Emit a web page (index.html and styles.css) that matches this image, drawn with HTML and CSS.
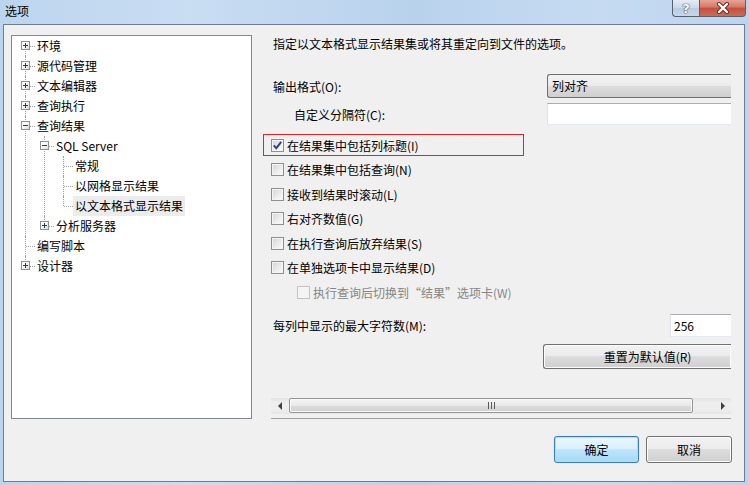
FILE: index.html
```html
<!DOCTYPE html>
<html lang="zh-CN">

<head>
  <meta charset="UTF-8">
  <meta name="viewport" content="width=device-width, initial-scale=1.0">
  <title>选项</title>
  <link rel="stylesheet" href="styles.css">
</head>

<body>
  <div class="window">
    <div class="titlebar">
      <span class="title">选项</span>
      <div class="caption-buttons">
        <div class="cap-btn help">?</div>
        <div class="cap-btn close">
          <svg width="16" height="12" viewBox="0 0 16 12">
            <path d="M4 2 L12 10 M12 2 L4 10" stroke="#6b2a22" stroke-width="4.2" stroke-linecap="round" />
            <path d="M4 2 L12 10 M12 2 L4 10" stroke="#ffffff" stroke-width="2.4" stroke-linecap="round" />
          </svg>
        </div>
      </div>
    </div>

    <div class="client">
      <div class="main">
        <!-- left navigation tree -->
        <div class="tree-box">
          <ul class="tree root">
            <li><div class="row"><span class="exp plus"></span><span class="label">环境</span></div></li>
            <li><div class="row"><span class="exp plus"></span><span class="label">源代码管理</span></div></li>
            <li><div class="row"><span class="exp plus"></span><span class="label">文本编辑器</span></div></li>
            <li><div class="row"><span class="exp plus"></span><span class="label">查询执行</span></div></li>
            <li>
              <div class="row"><span class="exp minus"></span><span class="label">查询结果</span></div>
              <ul class="tree">
                <li>
                  <div class="row"><span class="exp minus"></span><span class="label">SQL Server</span></div>
                  <ul class="tree">
                    <li><div class="row"><span class="label">常规</span></div></li>
                    <li><div class="row"><span class="label">以网格显示结果</span></div></li>
                    <li><div class="row"><span class="label selected">以文本格式显示结果</span></div></li>
                  </ul>
                </li>
                <li><div class="row"><span class="exp plus"></span><span class="label">分析服务器</span></div></li>
              </ul>
            </li>
            <li><div class="row"><span class="label">编写脚本</span></div></li>
            <li><div class="row"><span class="exp plus"></span><span class="label">设计器</span></div></li>
          </ul>
        </div>

        <!-- options page -->
        <div class="page">
          <div class="page-body">
            <p class="desc">指定以文本格式显示结果集或将其重定向到文件的选项。</p>

            <div class="field first">
              <span class="field-label">输出格式(O):</span>
              <div class="combo">列对齐</div>
            </div>
            <div class="field second">
              <span class="field-label indent">自定义分隔符(C):</span>
              <div class="textbox wide"></div>
            </div>

            <div class="checks">
              <div class="check-row highlight">
                <span class="checkbox checked">
                  <svg width="11" height="11" viewBox="0 0 11 11">
                    <path d="M1.8 5.4 L4.3 8.2 L9.2 1.8" fill="none" stroke="#2c437a" stroke-width="1.9" />
                  </svg>
                </span>
                <span>在结果集中包括列标题(I)</span>
              </div>
              <div class="check-row"><span class="checkbox"></span><span>在结果集中包括查询(N)</span></div>
              <div class="check-row"><span class="checkbox"></span><span>接收到结果时滚动(L)</span></div>
              <div class="check-row"><span class="checkbox"></span><span>右对齐数值(G)</span></div>
              <div class="check-row"><span class="checkbox"></span><span>在执行查询后放弃结果(S)</span></div>
              <div class="check-row"><span class="checkbox"></span><span>在单独选项卡中显示结果(D)</span></div>
              <div class="check-row sub disabled"><span class="checkbox"></span><span>执行查询后切换到“结果”选项卡(W)</span></div>
            </div>

            <div class="field third">
              <span class="field-label long">每列中显示的最大字符数(M):</span>
              <div class="textbox num">256</div>
            </div>

            <div class="reset-row">
              <div class="btn reset">重置为默认值(R)</div>
            </div>
          </div>

          <div class="hscroll">
            <span class="arrow left"></span>
            <div class="track">
              <div class="thumb"><span class="grip"></span></div>
            </div>
            <span class="arrow right"></span>
          </div>
        </div>
      </div>

      <div class="dialog-buttons">
        <div class="btn default">确定</div>
        <div class="btn">取消</div>
      </div>
    </div>
  </div>
</body>

</html>
```

FILE: styles.css
```css
body {
  margin: 0;
  font-family: "Noto Sans CJK SC", "Noto Sans", sans-serif;
  font-size: 12px;
  color: #000;
  background: #bed6ef;
}

.window {
  width: 749px;
  height: 485px;
  display: flex;
  flex-direction: column;
  background: linear-gradient(to right, #bcd5ee 0%, #c9ddf3 25%, #b9d2ec 55%, #c6dbf2 80%, #bcd4ee 100%);
}

.titlebar {
  height: 24px;
  display: flex;
  align-items: flex-start;
}

.title {
  margin: 3px 0 0 5px;
  line-height: 16px;
  font-size: 12px;
}

.caption-buttons {
  margin-left: auto;
  margin-right: 3px;
  display: flex;
}

.cap-btn {
  box-sizing: border-box;
  height: 17px;
  border: 1px solid #55606e;
  border-top: none;
  display: flex;
  align-items: center;
  justify-content: center;
}

.cap-btn.help {
  width: 27px;
  border-right: none;
  border-radius: 0 0 0 4px;
  background: linear-gradient(#e4ecf6, #cad8e9 50%, #b9cbe0 51%, #c8d8ea);
  color: #fff;
  font-weight: bold;
  font-family: "DejaVu Sans", sans-serif;
  font-size: 13px;
  text-shadow: 0 0 1px #3a4a5e, 0 0 1px #3a4a5e, 0 0 1px #3a4a5e;
}

.cap-btn.close {
  width: 47px;
  border-radius: 0 0 4px 0;
  background: linear-gradient(#e8a493, #d47867 45%, #c4503c 50%, #cf6a52 100%);
}

.client {
  box-sizing: border-box;
  margin: 0 4px 3px 3px;
  flex: 1;
  border: 1px solid #6f7e8e;
  background: #f0f0f0;
  padding: 10px 13px 0 7px;
  display: flex;
  flex-direction: column;
}

.main {
  display: flex;
  gap: 19px;
}

/* tree */

.tree-box {
  box-sizing: border-box;
  width: 241px;
  height: 384px;
  border: 1px solid #828790;
  background: #fff;
}

.tree {
  list-style: none;
  margin: 0;
  padding: 0;
}

.tree .tree {
  margin-left: 19px;
}

.tree li {
  position: relative;
}

.tree li::before {
  content: '';
  position: absolute;
  left: 13px;
  top: 0;
  bottom: 0;
  border-left: 1px dotted #a0a0a0;
}

.root > li:first-child::before {
  top: 10px;
}

.tree li:last-child::before {
  bottom: auto;
  height: 10px;
}

.row {
  position: relative;
  height: 20px;
  display: flex;
  align-items: center;
  padding-left: 23px;
}

.row::before {
  content: '';
  position: absolute;
  left: 14px;
  top: 10px;
  width: 9px;
  border-top: 1px dotted #a0a0a0;
}

.label {
  height: 20px;
  line-height: 20px;
  padding: 0 2px;
  white-space: nowrap;
}

.label.selected {
  background: #ececec;
}

.exp {
  position: absolute;
  z-index: 1;
  left: 9px;
  top: 5px;
  box-sizing: border-box;
  width: 9px;
  height: 9px;
  border: 1px solid #919191;
  background: linear-gradient(135deg, #ffffff 30%, #dcdcdc);
}

.exp::before,
.exp::after {
  content: '';
  position: absolute;
  background: #1e3a66;
}

.exp::before {
  left: 1px;
  top: 3px;
  width: 5px;
  height: 1px;
}

.exp.plus::after {
  left: 3px;
  top: 1px;
  width: 1px;
  height: 5px;
}

/* options page */

.page {
  box-sizing: border-box;
  width: 460px;
  height: 384px;
  display: flex;
  flex-direction: column;
  border-bottom: 1px solid #a0a0a0;
}

.page-body {
  flex: 1;
  padding-left: 2px;
}

.desc {
  margin: 1px 0 0;
  line-height: 16px;
}

.field {
  display: flex;
  align-items: center;
}

.field.first {
  margin-top: 22px;
  height: 24px;
}

.field.second {
  margin-top: 5px;
  height: 22px;
}

.field.third {
  margin-top: 9px;
  height: 23px;
}

.field-label {
  width: 274px;
  flex: none;
  margin-top: 1px;
}

.field-label.indent {
  box-sizing: border-box;
  padding-left: 21px;
}

.field-label.long {
  width: 397px;
}

.combo {
  box-sizing: border-box;
  flex: 1;
  height: 24px;
  line-height: 22px;
  padding-left: 4px;
  border: 1px solid #707070;
  border-right: none;
  border-radius: 3px 0 0 3px;
  background: linear-gradient(#f2f2f2 0%, #ebebeb 50%, #dddddd 50%, #cfcfcf 100%);
}

.textbox {
  box-sizing: border-box;
  flex: 1;
  height: 100%;
  background: #fff;
  border-top: 1px solid #abadb3;
  border-left: 1px solid #e2e3ea;
  border-bottom: 1px solid #e3e9ef;
}

.textbox.num {
  line-height: 21px;
  padding-left: 3px;
}

.checks {
  margin-top: 8px;
}

.check-row {
  position: relative;
  height: 24.5px;
  display: flex;
  align-items: center;
  gap: 3px;
  margin-left: -2px;
}

.check-row.highlight::after {
  content: '';
  position: absolute;
  left: -8px;
  top: 1px;
  width: 261px;
  height: 22px;
  border: 1px solid #e52421;
  box-sizing: border-box;
}

.check-row.sub {
  padding-left: 26px;
}

.checkbox {
  box-sizing: border-box;
  width: 13px;
  height: 13px;
  flex: none;
  border: 1px solid #8e8f8f;
  background: linear-gradient(135deg, #d2d4d8 0%, #f2f2f2 70%, #fbfbfb 100%);
  box-shadow: inset 0 0 0 1px #f4f4f4;
  display: flex;
  align-items: center;
  justify-content: center;
}

.check-row.disabled {
  color: #858585;
}

.check-row.disabled .checkbox {
  border-color: #c4c4c4;
  background: #f4f4f4;
  box-shadow: none;
}

.reset-row {
  margin-top: 7px;
  padding-left: 270px;
}

.btn {
  box-sizing: border-box;
  height: 27px;
  width: 86px;
  border: 1px solid #707070;
  border-radius: 3px;
  background: linear-gradient(#f2f2f2 0%, #ebebeb 50%, #dddddd 50%, #cfcfcf 100%);
  box-shadow: inset 0 0 0 1px #fcfcfc;
  display: flex;
  align-items: center;
  justify-content: center;
}

.btn.reset {
  width: 188px;
  height: 25px;
  padding-left: 20px;
  border-right: none;
  border-radius: 3px 0 0 3px;
}

.btn.default {
  width: 85px;
  border-color: #3c7fb1;
  background: linear-gradient(#eaf6fd 0%, #d9f0fc 50%, #bee6fd 50%, #a7d9f5 100%);
  box-shadow: inset 0 0 0 1px #9fe3fb, 0 0 1px #6ec3f0;
}

/* horizontal scrollbar */

.hscroll {
  height: 16px;
  margin-bottom: 4px;
  display: flex;
  align-items: center;
  background: linear-gradient(#e3e3e3, #eeeeee 30%, #eeeeee 70%, #e6e6e6);
}

.arrow {
  width: 17px;
  height: 16px;
  flex: none;
  display: flex;
  align-items: center;
  justify-content: center;
}

.arrow::before {
  content: '';
  border-top: 4px solid transparent;
  border-bottom: 4px solid transparent;
}

.arrow.left::before {
  border-right: 4px solid #404040;
}

.arrow.right::before {
  border-left: 4px solid #404040;
}

.track {
  flex: 1;
  height: 16px;
  padding-left: 1px;
  padding-right: 21px;
}

.thumb {
  box-sizing: border-box;
  height: 15px;
  border: 1px solid #979797;
  border-radius: 2px;
  background: linear-gradient(#f4f4f4, #e9e9e9 50%, #dcdcdc 51%, #d2d2d2);
  box-shadow: inset 0 0 0 1px #f7f7f7;
  display: flex;
  align-items: center;
  justify-content: center;
}

.grip {
  width: 7px;
  height: 7px;
  background: repeating-linear-gradient(to right, #585858 0 1px, transparent 1px 3px);
}

/* dialog buttons */

.dialog-buttons {
  margin-top: 17px;
  margin-right: -1px;
  display: flex;
  justify-content: flex-end;
  gap: 7px;
}
```
